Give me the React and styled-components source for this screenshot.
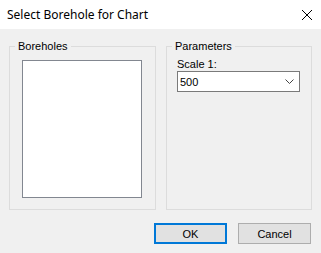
import React from 'react';
import styled, { createGlobalStyle } from 'styled-components';

const GlobalStyle = createGlobalStyle`
  html, body {
    margin: 0;
    padding: 0;
    background: #f0f0f0;
  }

  body {
    font-family: "Liberation Sans", Arial, sans-serif;
    font-size: 11px;
    color: #000;
  }
`;

const Dialog = styled.div`
  width: 321px;
  height: 253px;
  display: flex;
  flex-direction: column;
  background: #f0f0f0;
  overflow: hidden;
`;

const TitleBar = styled.div`
  height: 29px;
  display: flex;
  align-items: center;
  justify-content: space-between;
  padding: 0 9px 0 7px;
  background: #fff;
  font-family: "Noto Sans", sans-serif;
  font-size: 12px;
`;

const CloseButton = styled.button`
  width: 10px;
  height: 10px;
  padding: 0;
  border: 0;
  background: none;
  display: flex;
  margin-top: 1px;
`;

const Body = styled.div`
  flex: 1;
  display: flex;
  flex-direction: column;
  padding: 9px;
`;

const Groups = styled.div`
  display: flex;
  gap: 10px;
  align-items: stretch;
`;

const GroupBox = styled.fieldset`
  margin: 0;
  width: ${props => props.width}px;
  box-sizing: border-box;
  border: 1px solid #dcdcdc;
  padding: 0;
  min-width: 0;

  legend {
    margin-left: 5px;
    padding: 0 3px;
    line-height: 16px;
    font-size: 11px;
  }
`;

const GroupContent = styled.div`
  padding: ${props => props.pad};
`;

const ListBox = styled.div`
  width: 120px;
  height: 138px;
  box-sizing: border-box;
  border: 1px solid #828790;
  background: #fff;
`;

const FieldLabel = styled.div`
  line-height: 14px;
`;

const Combo = styled.div`
  width: 123px;
  height: 21px;
  box-sizing: border-box;
  border: 1px solid #7a7a7a;
  background: #fff;
  display: flex;
  align-items: center;
  justify-content: space-between;
  padding: 0 5px 0 2px;
`;

const Buttons = styled.div`
  display: flex;
  justify-content: flex-end;
  gap: 11px;
  margin-top: 13px;
  padding-right: 1px;
`;

const Button = styled.button`
  width: 73px;
  height: 21px;
  box-sizing: border-box;
  padding: 0;
  font-family: "Liberation Sans", Arial, sans-serif;
  font-size: 11px;
  color: #000;
  background: #e1e1e1;
  border: ${props => (props.primary ? '2px solid #0078d7' : '1px solid #adadad')};
`;

const Chevron = () => (
  <svg width="9" height="5" viewBox="0 0 9 5">
    <path d="M0.5 0.5 L4.5 4.5 L8.5 0.5" fill="none" stroke="#444" strokeWidth="1" />
  </svg>
);

const CloseIcon = () => (
  <svg width="10" height="10" viewBox="0 0 10 10">
    <path d="M0 0 L10 10 M10 0 L0 10" stroke="#000" strokeWidth="1" />
  </svg>
);

export default function App() {
  return (
    <Dialog>
      <GlobalStyle />
      <TitleBar>
        <span>Select Borehole for Chart</span>
        <CloseButton aria-label="Close">
          <CloseIcon />
        </CloseButton>
      </TitleBar>
      <Body>
        <Groups>
          <GroupBox width={147}>
            <legend>Boreholes</legend>
            <GroupContent pad="6px 13px 11px 12px">
              <ListBox />
            </GroupContent>
          </GroupBox>
          <GroupBox width={146}>
            <legend>Parameters</legend>
            <GroupContent pad="3px 10px 10px 10px">
              <FieldLabel>Scale 1:</FieldLabel>
              <Combo>
                <span>500</span>
                <Chevron />
              </Combo>
            </GroupContent>
          </GroupBox>
        </Groups>
        <Buttons>
          <Button primary>OK</Button>
          <Button>Cancel</Button>
        </Buttons>
      </Body>
    </Dialog>
  );
}
